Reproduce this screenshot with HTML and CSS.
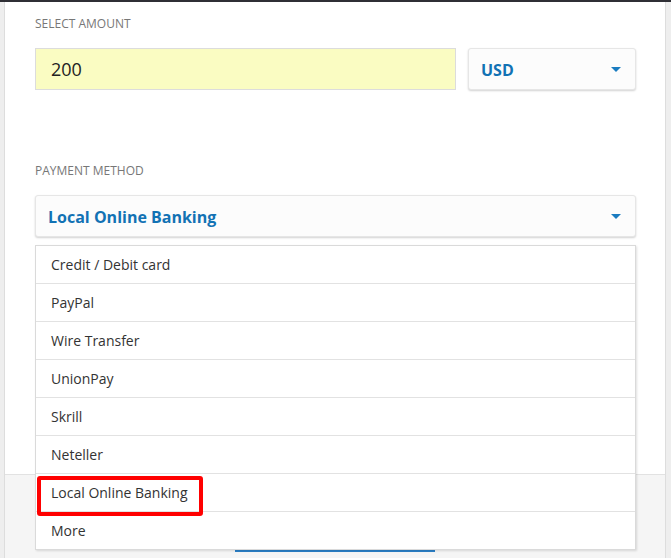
FILE: index.html
```html
<!DOCTYPE html>
<html lang="en">
<head>
<meta charset="utf-8">
<title>Deposit</title>
<link rel="stylesheet" href="styles.css">
</head>
<body>
<div class="topbar"></div>
<div class="frame">
  <div class="side side-left"></div>
  <div class="main">
    <form class="panel">
      <div class="field-label">Select amount</div>
      <div class="amount-row">
        <div class="amount-input">200</div>
        <div class="select currency">
          <span class="select-value">USD</span>
          <span class="caret"></span>
        </div>
      </div>
      <div class="field-label method-label">Payment method</div>
      <div class="method-wrap">
        <div class="select method">
          <span class="select-value">Local Online Banking</span>
          <span class="caret"></span>
        </div>
        <ul class="dropdown">
          <li class="option">Credit / Debit card</li>
          <li class="option">PayPal</li>
          <li class="option">Wire Transfer</li>
          <li class="option">UnionPay</li>
          <li class="option">Skrill</li>
          <li class="option">Neteller</li>
          <li class="option highlighted">Local Online Banking<span class="mark"></span></li>
          <li class="option">More</li>
        </ul>
      </div>
    </form>
    <div class="footer">
      <div class="submit"></div>
    </div>
  </div>
  <div class="side side-right"></div>
</div>
</body>
</html>
```
FILE: styles.css
```css
* { box-sizing: border-box; }
html, body {
  margin: 0;
  padding: 0;
  height: 558px;
  overflow: hidden;
}
body {
  font-family: "Open Sans", "Noto Sans", sans-serif;
  background: #f5f5f5;
  color: #333;
}
.topbar {
  height: 2px;
  background: #2f2f35;
}
.frame {
  display: flex;
  height: 556px;
  overflow: hidden;
}
.side {
  flex: none;
  background: #eeeeee;
}
.side-left {
  width: 5px;
  border-right: 1px solid #dddddd;
}
.side-right {
  width: 6px;
  border-left: 1px solid #dddddd;
}
.main {
  flex: 1;
  display: flex;
  flex-direction: column;
  min-width: 0;
}
.panel {
  background: #ffffff;
  border-bottom: 1px solid #e2e2e2;
  padding: 14px 29px 237px 30px;
  margin: 0;
}
.field-label {
  font-size: 12px;
  line-height: 16px;
  color: #777777;
  text-transform: uppercase;
}
.amount-row {
  display: flex;
  gap: 12px;
  margin-top: 16px;
}
.amount-input {
  flex: 1;
  height: 42px;
  background: #fafcc2;
  border: 1px solid #dcdcdc;
  padding: 0 15px;
  font-size: 18px;
  line-height: 40px;
  color: #222;
}
.select {
  display: flex;
  align-items: center;
  justify-content: space-between;
  height: 42px;
  background: #fcfcfc;
  border: 1px solid #e6e6e6;
  border-radius: 3px;
  box-shadow: 0 1px 2px rgba(0, 0, 0, 0.18);
  padding: 0 14px 0 12px;
}
.currency {
  width: 168px;
  flex: none;
}
.select-value {
  font-size: 16px;
  font-weight: 700;
  color: #1272b4;
  padding-top: 2px;
}
.caret {
  width: 0;
  height: 0;
  border-left: 5px solid transparent;
  border-right: 5px solid transparent;
  border-top: 5px solid #1a7cc0;
}
.method-label {
  margin-top: 73px;
}
.method-wrap {
  position: relative;
  margin-top: 16px;
}
.dropdown {
  position: absolute;
  top: 50px;
  left: 0;
  right: 0;
  margin: 0;
  padding: 0;
  list-style: none;
  background: #ffffff;
  border: 1px solid #dadada;
  box-shadow: 1px 1px 2px rgba(0, 0, 0, 0.12);
  z-index: 5;
}
.option {
  position: relative;
  height: 38px;
  line-height: 37px;
  padding-left: 15px;
  font-size: 14px;
  color: #333;
  border-bottom: 1px solid #e2e2e2;
}
.option:last-child {
  border-bottom: none;
  height: 37px;
}
.mark {
  position: absolute;
  left: 1px;
  top: 2px;
  width: 166px;
  height: 40px;
  border: 4px solid #ff0000;
  border-radius: 3px;
}
.footer {
  flex: 1;
  display: flex;
  justify-content: center;
  align-items: flex-start;
  padding-top: 75px;
}
.submit {
  width: 200px;
  height: 2px;
  background: #2b80c8;
}
```
